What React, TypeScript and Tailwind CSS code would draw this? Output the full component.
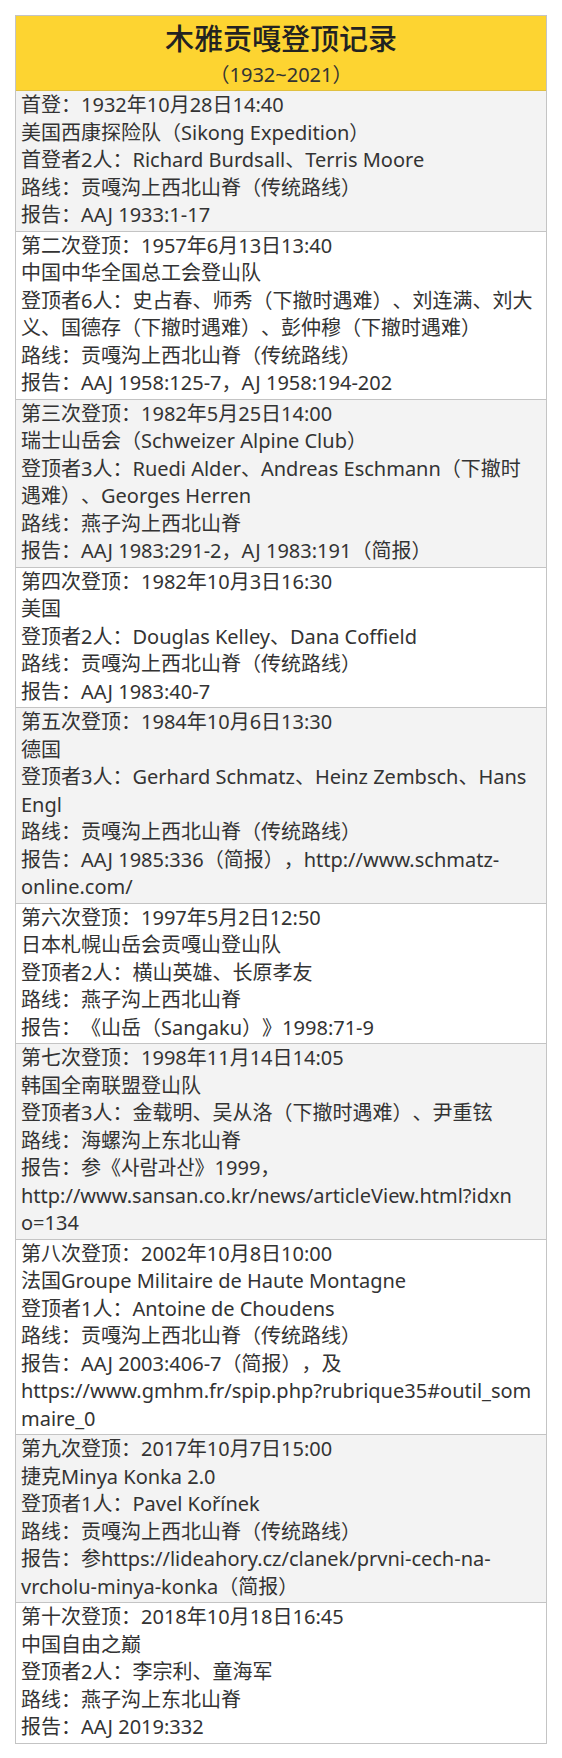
// Each record is written line by line, the way it wraps in the original table
const rows: string[][] = [
  [
    "首登：1932年10月28日14:40",
    "美国西康探险队（Sikong Expedition）",
    "首登者2人：Richard Burdsall、Terris Moore",
    "路线：贡嘎沟上西北山脊（传统路线）",
    "报告：AAJ 1933:1-17",
  ],
  [
    "第二次登顶：1957年6月13日13:40",
    "中国中华全国总工会登山队",
    "登顶者6人：史占春、师秀（下撤时遇难）、刘连满、刘大",
    "义、国德存（下撤时遇难）、彭仲穆（下撤时遇难）",
    "路线：贡嘎沟上西北山脊（传统路线）",
    "报告：AAJ 1958:125-7，AJ 1958:194-202",
  ],
  [
    "第三次登顶：1982年5月25日14:00",
    "瑞士山岳会（Schweizer Alpine Club）",
    "登顶者3人：Ruedi Alder、Andreas Eschmann（下撤时",
    "遇难）、Georges Herren",
    "路线：燕子沟上西北山脊",
    "报告：AAJ 1983:291-2，AJ 1983:191（简报）",
  ],
  [
    "第四次登顶：1982年10月3日16:30",
    "美国",
    "登顶者2人：Douglas Kelley、Dana Coffield",
    "路线：贡嘎沟上西北山脊（传统路线）",
    "报告：AAJ 1983:40-7",
  ],
  [
    "第五次登顶：1984年10月6日13:30",
    "德国",
    "登顶者3人：Gerhard Schmatz、Heinz Zembsch、Hans",
    "Engl",
    "路线：贡嘎沟上西北山脊（传统路线）",
    "报告：AAJ 1985:336（简报），http://www.schmatz-",
    "online.com/",
  ],
  [
    "第六次登顶：1997年5月2日12:50",
    "日本札幌山岳会贡嘎山登山队",
    "登顶者2人：横山英雄、长原孝友",
    "路线：燕子沟上西北山脊",
    "报告：《山岳（Sangaku）》1998:71-9",
  ],
  [
    "第七次登顶：1998年11月14日14:05",
    "韩国全南联盟登山队",
    "登顶者3人：金载明、吴从洛（下撤时遇难）、尹重铉",
    "路线：海螺沟上东北山脊",
    "报告：参《사람과산》1999，",
    "http://www.sansan.co.kr/news/articleView.html?idxn",
    "o=134",
  ],
  [
    "第八次登顶：2002年10月8日10:00",
    "法国Groupe Militaire de Haute Montagne",
    "登顶者1人：Antoine de Choudens",
    "路线：贡嘎沟上西北山脊（传统路线）",
    "报告：AAJ 2003:406-7（简报），及",
    "https://www.gmhm.fr/spip.php?rubrique35#outil_som",
    "maire_0",
  ],
  [
    "第九次登顶：2017年10月7日15:00",
    "捷克Minya Konka 2.0",
    "登顶者1人：Pavel Kořínek",
    "路线：贡嘎沟上西北山脊（传统路线）",
    "报告：参https://lideahory.cz/clanek/prvni-cech-na-",
    "vrcholu-minya-konka（简报）",
  ],
  [
    "第十次登顶：2018年10月18日16:45",
    "中国自由之巅",
    "登顶者2人：李宗利、童海军",
    "路线：燕子沟上东北山脊",
    "报告：AAJ 2019:332",
  ],
];

export default function App() {
  return (
    <div className="min-h-[1758px] bg-white pt-[15px] px-[15px] font-['Noto_Sans','Noto_Sans_CJK_SC',sans-serif] text-[#333] [text-spacing-trim:space-all]">
      <div className="w-[532px] border border-[#c4c4c4]">
        {/* Header */}
        <div className="bg-[#fdd431] border-b border-[#e0c040] text-center">
          <div className="pt-[2px] text-[29px] leading-[42px] font-medium text-[#222]">
            木雅贡嘎登顶记录
          </div>
          <div className="text-[20px] leading-[30px] text-[#333]">（1932~2021）</div>
        </div>

        {/* Records */}
        {rows.map((lines, i) => (
          <div
            key={i}
            className={`px-[5px] pb-[2px] text-[20px] leading-[27.5px] ${
              i < rows.length - 1 ? "border-b border-[#c4c4c4]" : ""
            } ${i % 2 === 0 ? "bg-[#f3f3f3]" : "bg-white"}`}
          >
            {lines.map((line, j) => (
              <div key={j} className="whitespace-nowrap">
                {line}
              </div>
            ))}
          </div>
        ))}
      </div>
    </div>
  );
}
